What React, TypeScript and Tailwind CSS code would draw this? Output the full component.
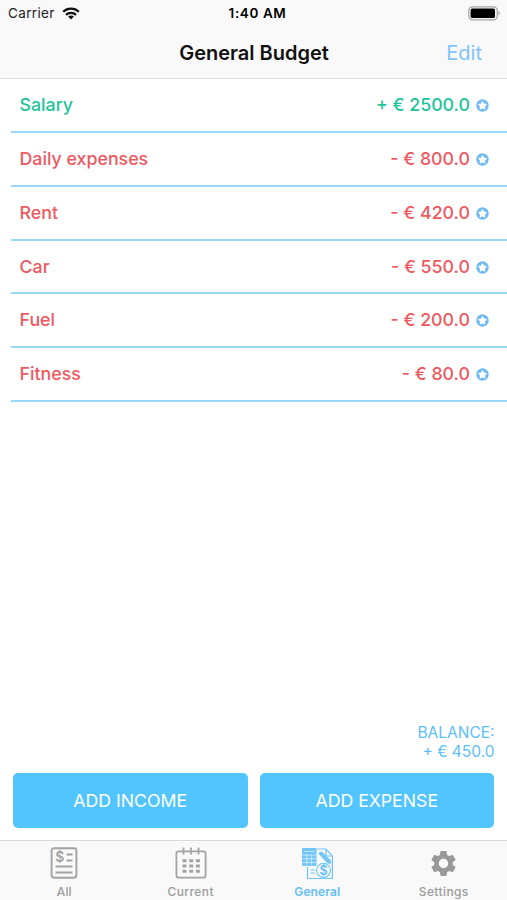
import React from 'react';
import clsx from 'clsx';
import { MdSettings } from 'react-icons/md';

interface Entry {
  name: string;
  amount: string;
  income?: boolean;
}

const entries: Entry[] = [
  { name: 'Salary', amount: '+ € 2500.0', income: true },
  { name: 'Daily expenses', amount: '- € 800.0' },
  { name: 'Rent', amount: '- € 420.0' },
  { name: 'Car', amount: '- € 550.0' },
  { name: 'Fuel', amount: '- € 200.0' },
  { name: 'Fitness', amount: '- € 80.0' },
];

const WifiIcon = () => (
  <svg width="18" height="13" viewBox="0 0 18 13" fill="none" stroke="#111" strokeWidth="2.3">
    <path d="M1.2 4.8C5.5 .6 12.5 .6 16.8 4.8" />
    <path d="M4 7.8c2.8-2.7 7.2-2.7 10 0" />
    <path d="M9 12.4 6.1 9.5c1.6-1.5 4.2-1.5 5.8 0z" fill="#111" stroke="none" />
  </svg>
);

const BatteryIcon = () => (
  <svg width="33" height="15" viewBox="0 0 33 15">
    <rect x=".8" y=".8" width="28.4" height="13" rx="3.6" fill="none" stroke="#a3a3a3" strokeWidth="1.2" />
    <rect x="2.6" y="2.6" width="24.4" height="9.4" rx="1.6" fill="#000" />
    <path d="M30.6 5v4.6c1.6-.6 1.6-4 0-4.6z" fill="#a3a3a3" />
  </svg>
);

const StarBadge = () => (
  <svg width="13" height="13" viewBox="0 0 13 13">
    <circle cx="6.5" cy="6.5" r="6.2" fill="#6fbaf5" />
    <path
      d="M6.5 3l1.1 2.1 2.4.4-1.7 1.75.35 2.45-2.15-1.1-2.15 1.1.35-2.45L3 5.5l2.4-.4z"
      fill="#fff"
      stroke="#fff"
      strokeWidth="1.4"
      strokeLinejoin="round"
    />
  </svg>
);

const AllIcon = () => (
  <svg width="28" height="32" viewBox="0 0 28 32" fill="none" stroke="#a3a3a3" strokeWidth="1.9">
    <rect x="1.6" y="1.3" width="24.8" height="29.4" rx="2.4" />
    <path d="M16.5 7.5h6M16.5 13.5h6M5.5 19.5h17M5.5 25.5h17" />
    <text x="5.2" y="15" fill="#a3a3a3" stroke="none" fontFamily="Inter" fontSize="14" fontWeight="600">
      $
    </text>
  </svg>
);

const CalendarIcon = () => (
  <svg width="32" height="32" viewBox="0 0 32 32" fill="none" stroke="#a3a3a3" strokeWidth="1.8">
    <rect x="1.4" y="4.4" width="29.2" height="26.2" rx="2" />
    <path d="M8.5 .5v7M16 .5v7M23.5 .5v7" />
    <path d="M7.5 13.7h17.5M7.5 19h17.5M7.5 24.2h17.5" strokeWidth="3" strokeDasharray="4 2.7" />
  </svg>
);

const GeneralIcon = () => (
  <svg width="33" height="33" viewBox="0 0 33 33" fill="none" stroke="#72c6f7" strokeWidth="1.2">
    <path d="M16 2h9L31.4 9v22.5H6.5V20" />
    <path d="M25 2v7h6.4" />
    <path d="M18.2 6.6l2.2-1.6 8.8 8.6.4 2.4-2.8-.2z" fill="#72c6f7" />
    <rect x="1" y="1" width="14.5" height="18" rx="1" fill="#72c6f7" stroke="none" />
    <path d="M3 4.5h10.5M1.5 8h13.5M1.5 11.8h13.5M1.5 15.5h13.5M5.8 8v10.5M10.6 8v10.5" stroke="#e4f4fd" strokeWidth=".7" />
    <path d="M9.5 23h4.5M9.5 26h4.5" />
    <circle cx="22.5" cy="23.3" r="7" fill="#f9f9f9" />
    <text x="18.6" y="28" fill="#62bff6" stroke="none" fontFamily="Inter" fontSize="12.5" fontWeight="600">
      $
    </text>
  </svg>
);

interface TabProps {
  label: string;
  active?: boolean;
  className?: string;
  children: React.ReactNode;
}

const Tab: React.FC<TabProps> = ({ label, active, className, children }) => (
  <div className={clsx('flex flex-1 flex-col items-center', active ? 'text-[#62bff6]' : 'text-[#9b9b9b]')}>
    <div className="flex h-[44px] items-center justify-center">{children}</div>
    <span className={clsx('text-[12px] leading-[13px] whitespace-nowrap', className)}>{label}</span>
  </div>
);

export default function App() {
  return (
    <div className="flex h-[900px] w-[507px] flex-col overflow-hidden bg-white font-['Inter',sans-serif]">
      {/* status bar + title */}
      <header className="h-[79.4px] shrink-0 border-b border-[#dedede] bg-[#f9f9f9]">
        <div className="grid h-[27px] grid-cols-3 items-center pl-2 pr-1.5">
          <div className="flex items-center gap-[7px]">
            <span className="text-[13.5px] tracking-[0.35px] text-[#222]">Carrier</span>
            <WifiIcon />
          </div>
          <span className="pl-[6px] text-center text-[13.5px] font-semibold tracking-[0.6px] text-black">1:40 AM</span>
          <div className="flex justify-end">
            <BatteryIcon />
          </div>
        </div>
        <div className="grid h-[51px] grid-cols-[1fr_auto_1fr] items-center pr-[25px] pl-[26px]">
          <span />
          <h1 className="text-[20px] font-semibold text-[#111]">General Budget</h1>
          <button className="text-right text-[20px] text-[#7fc4fa]">Edit</button>
        </div>
      </header>

      {/* entries */}
      <main className="flex-1">
        {entries.map((item) => (
          <div
            key={item.name}
            className={clsx(
              'ml-[11px] flex h-[53.75px] items-center justify-between border-b-2 border-[#99d8f8] pt-px pr-[18px] pl-[8.5px] text-[17.8px] font-medium',
              item.income ? 'text-[#1dc49b]' : 'text-[#f0585f]'
            )}
          >
            <span>{item.name}</span>
            <div className="flex items-center gap-1.5">
              <span>{item.amount}</span>
              <StarBadge />
            </div>
          </div>
        ))}
      </main>

      <div className="pr-[12.5px] pb-[12px] text-right text-[15.5px] leading-[19px] text-[#5ec0fa]">
        <p>BALANCE:</p>
        <p>+ € 450.0</p>
      </div>

      <div className="flex gap-[12px] px-[13px] pb-[12px]">
        <button className="h-[55px] flex-1 rounded-[5px] bg-[#52c5ff] pt-0.5 text-[17.7px] text-white">ADD INCOME</button>
        <button className="h-[55px] flex-1 rounded-[5px] bg-[#52c5ff] pt-0.5 text-[17.7px] text-white">ADD EXPENSE</button>
      </div>

      <nav className="flex h-[60px] shrink-0 border-t border-[#d9d9d9] bg-[#f9f9f9] pl-px">
        <Tab label="All" className="font-medium tracking-[0.2px]">
          <AllIcon />
        </Tab>
        <Tab label="Current" className="font-medium tracking-[0.4px]">
          <CalendarIcon />
        </Tab>
        <Tab label="General" className="font-semibold tracking-[0.1px]" active>
          <GeneralIcon />
        </Tab>
        <Tab label="Settings" className="font-medium tracking-[0.4px]">
          <MdSettings size={31} color="#999" />
        </Tab>
      </nav>
    </div>
  );
}
